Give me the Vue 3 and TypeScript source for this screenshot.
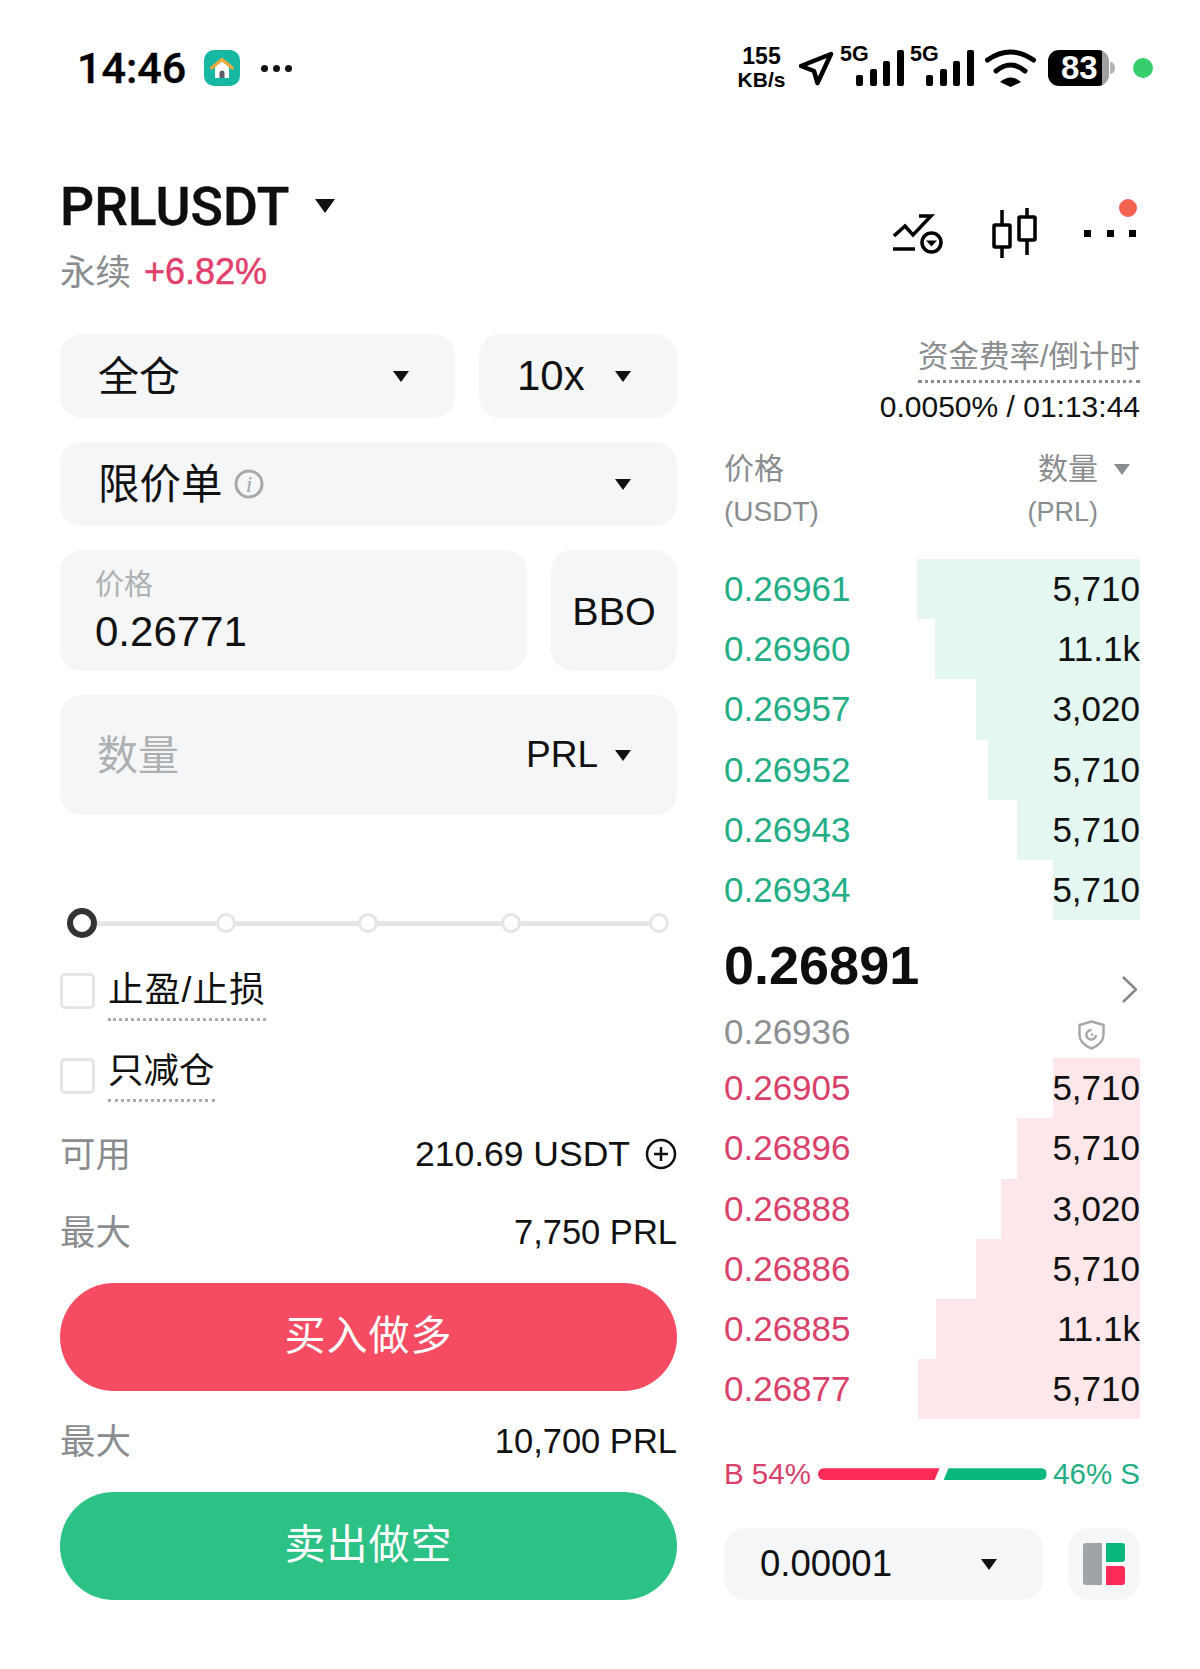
<template>
  <div class="page">
    <div class="status">
      <span class="time">14:46</span>
      <span class="home">
        <svg width="26" height="26" viewBox="0 0 26 26">
          <path d="M6 12v11h14V12L13 6z" fill="#fff" />
          <path d="M2.500 13 13 4.500 23.500 13" fill="none" stroke="#f2a93c" stroke-width="3" stroke-linecap="round" stroke-linejoin="round" />
          <path d="M10.500 23v-5a2.500 2.500 0 0 1 5 0v5z" fill="#5a6068" />
        </svg>
      </span>
      <span class="status-dots"><i></i><i></i><i></i></span>
      <div class="status-right">
        <div class="speed"><b>155</b><b class="unit">KB/s</b></div>
        <svg class="arrow" width="35" height="35" viewBox="0 0 35 35">
          <path d="M32 3 2 15l13 5 3.500 12z" fill="none" stroke="#000" stroke-width="4.500" stroke-linejoin="round" />
        </svg>
        <div v-for="n in 2" :key="n" class="signal">
          <span class="five-g">5G</span>
          <svg width="48" height="36" viewBox="0 0 48 36">
            <rect x="0" y="25" width="7" height="11" rx="2" />
            <rect x="14" y="19" width="7" height="17" rx="2" />
            <rect x="27" y="11" width="7" height="25" rx="2" />
            <rect x="41" y="0" width="7" height="36" rx="2" />
          </svg>
        </div>
        <svg class="wifi" width="51" height="38" viewBox="0 0 51 38">
          <path d="M2.500 11Q25.500-5 48.500 11M11 22q14.500-12 29 0" fill="none" stroke="#000" stroke-width="5" stroke-linecap="round" />
          <path d="M15 33q10.500-9 21 0l-10.500 5z" />
        </svg>
        <div class="battery">83</div>
        <span class="battery-tip"></span>
        <span class="green-dot"></span>
      </div>
    </div>

    <div class="market">
      <div>
        <div class="symbol-row">
          <span class="symbol">PRLUSDT</span>
          <span class="caret caret-lg"></span>
        </div>
        <div class="sub-row">
          <span class="perp">永续</span>
          <span class="change">+6.82%</span>
        </div>
      </div>
      <div class="tools">
        <svg width="50" height="41" viewBox="0 0 50 41" fill="none" stroke="#000" stroke-width="3.500">
          <path d="M0 36h22" />
          <path d="M1 23 12 13l8 9L38 3H26" />
          <circle cx="38.500" cy="29.500" r="9.500" fill="#fff" />
          <path d="M33 27.500h11l-5.500 6z" fill="#000" stroke="none" />
        </svg>
        <svg class="candle" width="45" height="50" viewBox="0 0 45 50" fill="none" stroke="#000" stroke-width="3.500">
          <path d="M10 2v48M35 0v47" />
          <rect x="2" y="17" width="16" height="22" rx="1" fill="#fff" />
          <rect x="27" y="9" width="16" height="23" rx="1" fill="#fff" />
        </svg>
        <div class="more">
          <i></i><i></i><i></i>
          <span class="badge"></span>
        </div>
      </div>
    </div>

    <div class="columns">
      <div class="form">
        <div class="form-row">
          <div class="card select margin-select">
            <span class="cjk-lg">全仓</span>
            <span class="caret"></span>
          </div>
          <div class="card select leverage">
            <span class="lev-text">10x</span>
            <span class="caret"></span>
          </div>
        </div>
        <div class="card select">
          <div class="order-type">
            <span class="cjk-lg">限价单</span>
            <svg width="30" height="30" viewBox="0 0 30 30">
              <circle cx="15" cy="15" r="13" fill="none" stroke="#a6a9ab" stroke-width="3" />
              <text x="15" y="23" text-anchor="middle" class="info-i">i</text>
            </svg>
          </div>
          <span class="caret"></span>
        </div>
        <div class="form-row">
          <div class="card price">
            <div class="price-label">价格</div>
            <div class="price-value">0.26771</div>
          </div>
          <div class="card bbo">BBO</div>
        </div>
        <div class="card qty">
          <span class="cjk-lg placeholder">数量</span>
          <div class="unit-pick">
            <span class="prl">PRL</span>
            <span class="caret"></span>
          </div>
        </div>

        <div class="slider">
          <span class="thumb"></span>
          <template v-for="grow in sliderSegments" :key="grow">
            <span class="seg" :style="{ flexGrow: grow }"></span>
            <span class="node"></span>
          </template>
        </div>

        <div class="check">
          <span class="box"></span>
          <span class="check-label check-label-wide">止盈/止损</span>
        </div>
        <div class="check check-second">
          <span class="box"></span>
          <span class="check-label">只减仓</span>
        </div>

        <div class="info-row avail">
          <span class="info-name">可用</span>
          <div class="avail-right">
            <span class="info-value avail-value">210.69 USDT</span>
            <svg width="32" height="32" viewBox="0 0 32 32" fill="none" stroke="#111" stroke-width="2.500">
              <circle cx="16" cy="16" r="14" />
              <path d="M16 9v14M9 16h14" />
            </svg>
          </div>
        </div>
        <div class="info-row max-one">
          <span class="info-name">最大</span>
          <span class="info-value">7,750 PRL</span>
        </div>
        <div class="action buy">买入做多</div>
        <div class="info-row max-two">
          <span class="info-name">最大</span>
          <span class="info-value">10,700 PRL</span>
        </div>
        <div class="action sell">卖出做空</div>
      </div>

      <div class="book">
        <div class="funding">
          <span class="funding-title">资金费率/倒计时</span>
          <div class="funding-value">0.0050% / 01:13:44</div>
        </div>
        <div class="book-head">
          <div>
            <div class="head-line">价格</div>
            <div class="head-line head-unit">(USDT)</div>
          </div>
          <div class="head-right">
            <div class="head-line qty-head">数量<span class="caret caret-gray"></span></div>
            <div class="head-line head-unit prl-unit">(PRL)</div>
          </div>
        </div>

        <div class="rows asks">
          <div v-for="r in asks" :key="r.price" class="row">
            <span class="depth depth-ask" :style="{ width: r.depth + 'px' }"></span>
            <span class="row-price ask">{{ r.price }}</span>
            <span class="row-qty">{{ r.qty }}</span>
          </div>
        </div>

        <div class="mid">
          <span class="last">0.26891</span>
          <svg class="chevron" width="15" height="27" viewBox="0 0 15 27" fill="none" stroke="#85888b" stroke-width="2.500">
            <path d="m1 1 13 12.500L1 26" />
          </svg>
        </div>
        <div class="mark">
          <span class="mark-price">0.26936</span>
          <svg class="shield" width="27" height="30" viewBox="0 0 27 30" fill="none" stroke="#a6a9ab" stroke-width="2.500">
            <path d="M13.500 1.500 25.500 5v10c0 6.500-5 10.500-12 13.500C6.500 25.500 1.500 21.500 1.500 15V5z" />
            <path d="M18 15a4.800 4.800 0 1 1-4.500-5" />
            <circle cx="14" cy="14.500" r="1.200" fill="#a6a9ab" stroke="none" />
          </svg>
        </div>

        <div class="rows">
          <div v-for="r in bids" :key="r.price" class="row">
            <span class="depth depth-bid" :style="{ width: r.depth + 'px' }"></span>
            <span class="row-price bid">{{ r.price }}</span>
            <span class="row-qty">{{ r.qty }}</span>
          </div>
        </div>

        <div class="ratio">
          <span class="ratio-b">B 54%</span>
          <div class="ratio-bar">
            <span class="bar-red"></span>
            <span class="bar-green"></span>
          </div>
          <span class="ratio-s">46% S</span>
        </div>

        <div class="book-foot">
          <div class="card tick">
            <span>0.00001</span>
            <span class="caret"></span>
          </div>
          <div class="card layout-btn">
            <div class="layout-icon">
              <span class="li-gray"></span>
              <div class="li-col">
                <span class="li-green"></span>
                <span class="li-red"></span>
              </div>
            </div>
          </div>
        </div>
      </div>
    </div>
  </div>
</template>

<script setup lang="ts">
interface BookRow {
  price: string;
  qty: string;
  depth: number;
}

const sliderSegments: number[] = [119, 122, 123, 128];

const asks: BookRow[] = [
  { price: '0.26961', qty: '5,710', depth: 223 },
  { price: '0.26960', qty: '11.1k', depth: 205 },
  { price: '0.26957', qty: '3,020', depth: 164 },
  { price: '0.26952', qty: '5,710', depth: 152 },
  { price: '0.26943', qty: '5,710', depth: 123 },
  { price: '0.26934', qty: '5,710', depth: 87 }
];

const bids: BookRow[] = [
  { price: '0.26905', qty: '5,710', depth: 87 },
  { price: '0.26896', qty: '5,710', depth: 123 },
  { price: '0.26888', qty: '3,020', depth: 139 },
  { price: '0.26886', qty: '5,710', depth: 164 },
  { price: '0.26885', qty: '11.1k', depth: 204 },
  { price: '0.26877', qty: '5,710', depth: 222 }
];
</script>

<style scoped>
.page {
  width: 1200px;
  height: 1669px;
  background: #fff;
  color: #111;
  font-family: "Liberation Sans", "Noto Sans CJK SC", sans-serif;
  overflow: hidden;
}

/* status bar */
.status {
  display: flex;
  align-items: center;
  height: 136px;
  padding: 0 47px 0 77px;
}

.time {
  font-family: Roboto, "Liberation Sans", sans-serif;
  font-size: 43px;
  font-weight: 500;
  color: #000;
  -webkit-text-stroke: 0.4px #000;
}

.home {
  display: flex;
  align-items: center;
  justify-content: center;
  width: 36px;
  height: 36px;
  margin-left: 18px;
  border-radius: 10px;
  background: #17b8a2;
}

.status-dots {
  display: flex;
  gap: 5px;
  margin-left: 21px;
}

.status-dots i {
  width: 7px;
  height: 7px;
  border-radius: 50%;
  background: #111;
}

.status-right {
  display: flex;
  align-items: center;
  margin-left: auto;
}

.speed {
  display: flex;
  flex-direction: column;
  align-items: center;
  width: 47px;
  margin-left: -1px;
  line-height: 24px;
  font-size: 23px;
  color: #000;
}

.speed .unit {
  font-size: 21px;
}

.arrow {
  margin-left: 14px;
}

.signal {
  position: relative;
  width: 64px;
  height: 36px;
  margin-left: 6px;
  padding-left: 16px;
  box-sizing: border-box;
}

.five-g {
  position: absolute;
  left: 0;
  top: -7px;
  font-size: 21.500px;
  font-weight: 700;
  line-height: 22px;
  color: #000;
}

.wifi {
  margin-left: 11px;
}

.battery {
  width: 61px;
  height: 36px;
  margin-left: 12px;
  border-radius: 11px;
  background: linear-gradient(to right, #000 89%, #a0a0a0 89%);
  color: #fff;
  font-size: 33px;
  font-weight: 700;
  line-height: 36px;
  padding-left: 13px;
  box-sizing: border-box;
}

.battery-tip {
  width: 5px;
  height: 12px;
  margin-left: 1px;
  border-radius: 0 6px 6px 0;
  background: #b5b5b5;
}

.green-dot {
  width: 20px;
  height: 20px;
  margin-left: 18px;
  border-radius: 50%;
  background: #37cf6e;
}

/* market header */
.market {
  display: flex;
  justify-content: space-between;
  align-items: flex-start;
  height: 198px;
  padding: 0 60px;
}

.symbol-row {
  display: flex;
  align-items: center;
  margin-top: 40px;
  height: 60px;
}

.symbol {
  font-family: Roboto, "Liberation Sans", sans-serif;
  font-size: 53.500px;
  font-weight: 500;
  color: #0c0e10;
  -webkit-text-stroke: 0.4px #0c0e10;
}

.sub-row {
  display: flex;
  align-items: center;
  margin-top: 16px;
  height: 40px;
}

.perp {
  padding-bottom: 6px;
  font-size: 35.500px;
  color: #8a8d90;
}

.change {
  margin-left: 13px;
  font-size: 36px;
  color: #e23f6c;
  -webkit-text-stroke: 0.5px #e23f6c;
}

.tools {
  display: flex;
  align-items: center;
  height: 50px;
  margin-top: 72px;
  padding-right: 4px;
}

.candle {
  margin-left: 49px;
}

.more {
  position: relative;
  display: flex;
  justify-content: space-between;
  width: 52px;
  margin-left: 47px;
}

.more i {
  width: 7px;
  height: 7px;
  background: #000;
}

.badge {
  position: absolute;
  top: -31px;
  right: -1px;
  width: 18px;
  height: 18px;
  border-radius: 50%;
  background: #f2604f;
}

/* shared */
.caret {
  width: 0;
  height: 0;
  flex: none;
  border-left: 8px solid transparent;
  border-right: 8px solid transparent;
  border-top: 11px solid #111;
}

.caret-lg {
  margin-left: 26px;
  border-left-width: 10px;
  border-right-width: 10px;
  border-top-width: 14px;
}

.caret-gray {
  margin-left: 16px;
  border-top-color: #8a8d90;
}

.card {
  background: #f4f6f7;
  border-radius: 22px;
}

.columns {
  display: flex;
  gap: 47px;
  padding: 0 60px;
}

/* order form */
.form {
  width: 617px;
  display: flex;
  flex-direction: column;
}

.form > .card,
.form-row {
  margin-bottom: 24px;
}

.form-row {
  display: flex;
  gap: 24px;
}

.select {
  display: flex;
  align-items: center;
  justify-content: space-between;
  height: 84px;
  padding: 0 46px 0 38px;
  box-sizing: border-box;
}

.margin-select {
  flex: 1;
}

.leverage {
  width: 198px;
}

.lev-text {
  font-size: 42px;
}

.cjk-lg {
  padding-bottom: 7px;
  font-size: 41px;
}

.order-type {
  display: flex;
  align-items: center;
  gap: 11px;
}

.order-type .cjk-lg {
  font-size: 41.500px;
}

.info-i {
  font-family: "Liberation Serif", serif;
  font-style: italic;
  font-size: 24px;
  fill: #a6a9ab;
}

.price {
  flex: 1;
  height: 121px;
  padding: 17px 0 0 35px;
  box-sizing: border-box;
}

.price-label {
  font-size: 29px;
  line-height: 36px;
  color: #adb0b2;
}

.price-value {
  margin-top: 4px;
  font-size: 42px;
  line-height: 50px;
}

.bbo {
  display: flex;
  align-items: center;
  justify-content: center;
  width: 126px;
  height: 121px;
  padding-top: 2px;
  box-sizing: border-box;
  font-size: 39.500px;
}

.qty {
  display: flex;
  align-items: center;
  justify-content: space-between;
  height: 120px;
  padding: 0 46px 0 37px;
  margin-bottom: 0 !important;
}

.placeholder {
  color: #adb0b2;
}

.unit-pick {
  display: flex;
  align-items: center;
  gap: 17px;
}

.prl {
  font-size: 37px;
}

.slider {
  display: flex;
  align-items: center;
  height: 30px;
  margin-top: 93px;
  padding: 0 8px 0 7px;
}

.thumb {
  width: 30px;
  height: 30px;
  flex: none;
  box-sizing: border-box;
  border: 6px solid #333;
  border-radius: 50%;
}

.seg {
  flex-basis: 0;
  height: 5px;
  background: #e3e5e6;
}

.node {
  width: 20px;
  height: 20px;
  flex: none;
  box-sizing: border-box;
  border: 3px solid #e3e5e6;
  border-radius: 50%;
}

.check {
  display: flex;
  align-items: flex-start;
  margin-top: 30px;
}

.check-second {
  margin-top: 28px;
}

.box {
  width: 35px;
  height: 36px;
  margin-top: 5px;
  flex: none;
  box-sizing: border-box;
  border: 3px solid #e3e5e6;
  border-radius: 5px;
}

.check-second .box {
  margin-top: 9px;
}

.check-label {
  margin-left: 13px;
  padding-bottom: 6px;
  font-size: 35.500px;
  line-height: 44px;
  border-bottom: 3px dotted #a9acae;
}

.check-label-wide {
  letter-spacing: 1.200px;
}

.info-row {
  display: flex;
  align-items: center;
  justify-content: space-between;
  height: 44px;
}

.avail {
  margin-top: 30px;
}

.max-one {
  margin-top: 34px;
}

.max-two {
  margin-top: 28px;
}

.info-name {
  padding-bottom: 6px;
  font-size: 35.500px;
  color: #8a8d90;
}

.info-value {
  font-size: 34.500px;
}

.avail-value {
  font-size: 35.500px;
}

.avail-right {
  display: flex;
  align-items: center;
  gap: 15px;
}

.action {
  display: flex;
  align-items: center;
  justify-content: center;
  height: 108px;
  margin-top: 29px;
  padding-bottom: 10px;
  box-sizing: border-box;
  border-radius: 55px;
  color: #fff;
  font-size: 41px;
  letter-spacing: 1px;
}

.buy {
  background: #f64c63;
}

.sell {
  background: #2cc185;
}

/* order book */
.book {
  width: 416px;
}

.funding {
  text-align: right;
}

.funding-title {
  display: inline-block;
  font-size: 30.500px;
  line-height: 44px;
  padding-bottom: 2px;
  color: #8a8d90;
  border-bottom: 3px dotted #8a8d90;
}

.funding-value {
  margin-top: 4px;
  font-size: 30px;
  line-height: 40px;
}

.book-head {
  display: flex;
  justify-content: space-between;
  margin-top: 22px;
}

.head-line {
  font-size: 30px;
  line-height: 40px;
  color: #8a8d90;
}

.head-unit {
  margin-top: 3px;
  font-size: 28px;
}

.head-right {
  text-align: right;
}

.qty-head {
  display: flex;
  align-items: center;
  justify-content: flex-end;
  padding-right: 10px;
}

.prl-unit {
  padding-right: 42px;
  font-size: 27px;
}

.asks {
  margin-top: 27px;
}

.row {
  position: relative;
  display: flex;
  align-items: center;
  justify-content: space-between;
  height: 60.200px;
  font-size: 35px;
}

.depth {
  position: absolute;
  top: 0;
  right: 0;
  bottom: 0;
}

.depth-ask {
  background: #e4f8f1;
}

.depth-bid {
  background: #fde7eb;
}

.row-price,
.row-qty {
  position: relative;
}

.ask {
  color: #23ad85;
}

.bid {
  color: #d9416b;
}

.mid {
  display: flex;
  align-items: flex-start;
  justify-content: space-between;
  height: 86px;
}

.last {
  font-size: 54px;
  font-weight: 700;
  line-height: 90px;
  color: #0c0e10;
}

.chevron {
  margin: 56px 3px 0 0;
}

.mark {
  display: flex;
  align-items: center;
  justify-content: space-between;
  height: 52px;
  padding-right: 35px;
}

.mark-price {
  font-size: 35px;
  color: #8c9093;
}

.shield {
  margin-top: 6px;
}

.ratio {
  display: flex;
  align-items: center;
  justify-content: space-between;
  height: 40px;
  margin-top: 35px;
  font-size: 29.500px;
}

.ratio-b {
  color: #d9416b;
}

.ratio-s {
  color: #23ad85;
}

.ratio-bar {
  display: flex;
  gap: 4px;
  width: 229px;
  height: 12px;
}

.bar-red {
  flex: 122;
  background: #fb2a57;
  border-radius: 6px 0 0 6px;
  clip-path: polygon(0 0, 100% 0, calc(100% - 5px) 100%, 0 100%);
}

.bar-green {
  flex: 103;
  background: #0ab77b;
  border-radius: 0 6px 6px 0;
  clip-path: polygon(5px 0, 100% 0, 100% 100%, 0 100%);
}

.book-foot {
  display: flex;
  justify-content: space-between;
  margin-top: 34px;
}

.tick {
  display: flex;
  align-items: center;
  justify-content: space-between;
  width: 319px;
  height: 72px;
  padding: 0 46px 0 36px;
  box-sizing: border-box;
  font-size: 36.500px;
}

.layout-btn {
  display: flex;
  align-items: center;
  justify-content: center;
  width: 72px;
  height: 72px;
}

.layout-icon {
  display: flex;
  gap: 4px;
  width: 42px;
  height: 42px;
}

.li-gray {
  width: 19px;
  background: #a1a4a7;
  border-radius: 3px 0 0 3px;
}

.li-col {
  display: flex;
  flex-direction: column;
  gap: 4px;
  width: 19px;
}

.li-green,
.li-red {
  height: 19px;
  border-radius: 0 3px 3px 0;
}

.li-green {
  background: #0ab77b;
}

.li-red {
  background: #fb2a57;
}
</style>
